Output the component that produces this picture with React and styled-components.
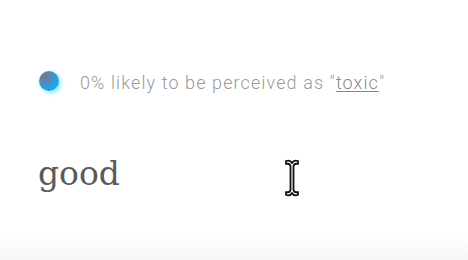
import styled, { createGlobalStyle } from "styled-components";

const Global = createGlobalStyle`
  html, body { margin: 0; padding: 0; background: #fff; }
  #root { height: 260px; }
`;

export default function App() {
  return (
    <Page>
      <Global />
      <Card>
        <Status>
          <Dot />
          <Label>
            0% likely to be perceived as "<Word>toxic</Word>"
          </Label>
        </Status>
        <Editor>
          good
          <Cursor viewBox="0 0 16 38" aria-hidden>
            <path
              d="M2 2 C5 1 7 2 8 4 C9 2 11 1 14 2 L14 5 C12 4.5 10 5 9.5 7 L9.5 31 C10 33 12 33.5 14 33 L14 36 C11 37 9 36 8 34 C7 36 5 37 2 36 L2 33 C4 33.5 6 33 6.5 31 L6.5 7 C6 5 4 4.5 2 5 Z"
              fill="#fff"
              stroke="#111"
              strokeWidth="1.8"
              strokeLinejoin="round"
            />
          </Cursor>
        </Editor>
      </Card>
      <Fade />
    </Page>
  );
}

const Page = styled.div`
  height: 260px;
  display: flex;
  flex-direction: column;
  background: #fff;
  overflow: hidden;
`;

const Card = styled.div`
  flex: 1;
  padding: 70px 0 0 38px;
  display: flex;
  flex-direction: column;
  gap: 60px;
`;

const Status = styled.div`
  display: flex;
  align-items: center;
  gap: 21px;
  padding-left: 1px;
`;

const Dot = styled.span`
  width: 20px;
  height: 20px;
  margin-top: -2px;
  border-radius: 50%;
  background: radial-gradient(circle at 30% 28%, #707a86 0%, #4d8cc4 38%, #1aa6f4 70%);
  box-shadow: 2px 2px 4px rgba(0, 220, 255, 0.55);
  filter: blur(0.4px);
`;

const Label = styled.span`
  font-family: Roboto, "Liberation Sans", sans-serif;
  font-weight: 300;
  font-size: 18px;
  letter-spacing: 1.1px;
  line-height: 22px;
  padding-top: 2px;
  color: #9a9a9a;
`;

const Word = styled.span`
  color: #888;
  text-decoration: underline;
  text-underline-offset: 2px;
`;

const Editor = styled.div`
  position: relative;
  font-family: "DejaVu Serif", "Liberation Serif", serif;
  font-size: 33px;
  color: #5a5a5a;
  line-height: 40px;
`;

const Cursor = styled.svg`
  position: absolute;
  left: 246px;
  top: 5px;
  width: 16px;
  height: 38px;
`;

const Fade = styled.div`
  height: 24px;
  background: linear-gradient(#fff, #f6f6f6);
`;
